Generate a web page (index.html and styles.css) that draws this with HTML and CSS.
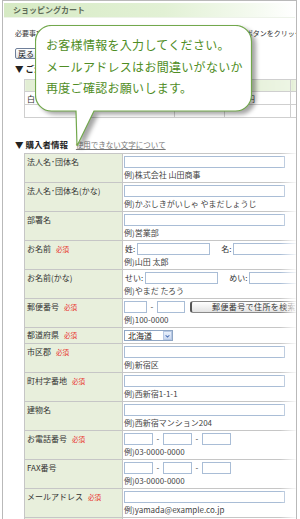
FILE: index.html
```html
<!DOCTYPE html>
<html lang="ja">
<head>
<meta charset="utf-8">
<title>ショッピングカート</title>
<link rel="stylesheet" href="styles.css">
</head>
<body>
<div class="frame">
  <div class="header">ショッピングカート</div>
  <div class="content">
    <p class="intro">必要事項をご入力のうえ、ページ下部にある「ご注文内容の確認へ進む」ボタンをクリックしてください。</p>
    <button class="back" type="button">戻る</button>
    <h2 class="sec">▼ ご注文内容</h2>
    <table class="order">
      <colgroup><col class="c1"><col class="c2"><col class="c3"><col class="c4"></colgroup>
      <tr class="oh"><td></td><td>数量</td><td>小計</td><td></td></tr>
      <tr><td>白ワイン</td><td>1</td><td>3,000円</td><td></td></tr>
      <tr><td></td><td></td><td></td><td></td></tr>
    </table>
    <h2 class="sec buyer">▼ 購入者情報 <a class="ng" href="#">使用できない文字について</a></h2>
    <table class="form">
      <colgroup><col class="cl"><col class="cr"></colgroup>
      <tr><th>法人名･団体名</th><td><input class="full" type="text"><div class="ex">例)株式会社 山田商事</div></td></tr>
      <tr><th>法人名･団体名(かな)</th><td><input class="full" type="text"><div class="ex">例)かぶしきがいしゃ やまだしょうじ</div></td></tr>
      <tr><th>部署名</th><td><input class="full" type="text"><div class="ex">例)営業部</div></td></tr>
      <tr><th>お名前<span class="req">必須</span></th><td><div class="line"><span class="pre">姓:</span><input class="nm" type="text"><span class="pre">名:</span><input class="nm" type="text"></div><div class="ex">例)山田 太郎</div></td></tr>
      <tr><th>お名前(かな)</th><td><div class="line"><span class="pre">せい:</span><input class="nm" type="text"><span class="pre">めい:</span><input class="nm" type="text"></div><div class="ex">例)やまだ たろう</div></td></tr>
      <tr><th>郵便番号<span class="req">必須</span></th><td><div class="line"><input class="z1" type="text"><span class="dash">-</span><input class="z2" type="text"><button class="zip" type="button">郵便番号で住所を検索する</button></div><div class="ex">例)100-0000</div></td></tr>
      <tr class="selrow"><th>都道府県<span class="req">必須</span></th><td><span class="sel"><select><option>北海道</option><option>青森県</option></select><span class="arr"><svg viewBox="0 0 9 8" width="9" height="8"><path d="M2 3 L4.5 5.5 L7 3" fill="none" stroke="#4a6fb5" stroke-width="1.4"/></svg></span></span></td></tr>
      <tr><th>市区郡<span class="req">必須</span></th><td><input class="full" type="text"><div class="ex">例)新宿区</div></td></tr>
      <tr><th>町村字番地<span class="req">必須</span></th><td><input class="full" type="text"><div class="ex">例)西新宿1-1-1</div></td></tr>
      <tr><th>建物名</th><td><input class="full" type="text"><div class="ex">例)西新宿マンション204</div></td></tr>
      <tr><th>お電話番号<span class="req">必須</span></th><td><div class="line"><input class="tel" type="text"><span class="dash">-</span><input class="tel" type="text"><span class="dash">-</span><input class="tel" type="text"></div><div class="ex">例)03-0000-0000</div></td></tr>
      <tr><th>FAX番号</th><td><div class="line"><input class="tel" type="text"><span class="dash">-</span><input class="tel" type="text"><span class="dash">-</span><input class="tel" type="text"></div><div class="ex">例)03-0000-0000</div></td></tr>
      <tr><th>メールアドレス<span class="req">必須</span></th><td><input class="full" type="text"><div class="ex">例)yamada@example.co.jp</div></td></tr>
      <tr><th>メールアドレス(確認用)<span class="req">必須</span></th><td><input class="full" type="text"><div class="ex">確認のためもう一度入力してください</div></td></tr>
    </table>
  </div>
  <div class="fade"></div>
</div>
<div class="callout">
  <svg class="bubble" viewBox="0 0 224 126" width="224" height="126">
    <path d="M16.5 0.5 H200.5 A16 16 0 0 1 216.5 16.5 V70 A16 16 0 0 1 200.5 86 H59 L42 121 L41 86 H16.5 A16 16 0 0 1 0.5 70 V16.5 A16 16 0 0 1 16.5 0.5 Z" fill="#fff" stroke="#72a84c" stroke-width="1.2"/>
  </svg>
  <p class="msg">お客様情報を入力してください。<br>メールアドレスはお間違いがないか<br>再度ご確認お願いします。</p>
</div>
</body>
</html>
```

FILE: styles.css
```css
* { box-sizing: border-box; }
html, body { margin: 0; padding: 0; background: #fff; }
body {
  width: 300px;
  height: 519px;
  overflow: hidden;
  font-family: "Noto Sans CJK JP", "Noto Sans", sans-serif;
  font-size: 8px;
  color: #333;
  position: relative;
}
.frame {
  position: relative;
  margin: 0 3px 0 2px;
  height: 560px;
  border: 1px solid #b9b9b9;
  overflow: hidden;
}
.header {
  margin: 2px 1px 0;
  height: 15px;
  padding-left: 9px;
  line-height: 14px;
  font-weight: bold;
  font-size: 8px;
  color: #5e6b58;
  background: linear-gradient(to right, #d6eac4 0%, #e2f1d5 55%, #f4faef 85%, #fff 100%);
  border-bottom: 1px solid #eef3ea;
}
.content { padding-left: 12px; }
.intro {
  margin: 10px 0 0;
  font-size: 7px;
  line-height: 10px;
  white-space: nowrap;
  color: #333;
}
.back {
  display: block;
  margin-top: 10px;
  height: 11px;
  padding: 0 2px;
  font-family: inherit;
  font-size: 8px;
  line-height: 9px;
  color: #222;
  border: 1px solid #6f7f99;
  border-radius: 2px;
  background: linear-gradient(#ffffff, #dfe3ea);
}
.sec {
  margin: 4px 0 0;
  font-size: 8.5px;
  line-height: 10px;
  font-weight: bold;
  color: #222;
}
.order {
  margin: 6px 0 0 9px;
  border-collapse: collapse;
  table-layout: fixed;
  width: 272px;
}
.order .c1 { width: 150px; }
.order .c2 { width: 50px; }
.order .c3 { width: 66px; }
.order .c4 { width: 6px; }
.order td {
  border: 1px solid #cfcfcf;
  height: 13px;
  padding: 0 2px;
  line-height: 11px;
  font-size: 8px;
}
.order .oh td {
  height: 12px;
  background: linear-gradient(to right, #e2eed4, #edf5e4);
}
.buyer { margin-top: 21px; }
.ng {
  margin-left: 6px;
  font-weight: normal;
  font-size: 7.5px;
  color: #777;
  text-decoration: underline;
}
.form {
  margin: 3px 0 0 9px;
  border-collapse: collapse;
  table-layout: fixed;
  width: 300px;
}
.form .cl { width: 98px; }
.form .cr { width: 202px; }
.form th, .form td {
  border: 1px solid #c6c6c6;
  vertical-align: top;
}
.form th {
  background: #e8efdc;
  text-align: left;
  font-weight: normal;
  padding: 3px 2px 0;
  line-height: 10px;
  font-size: 8px;
  color: #333;
  white-space: nowrap;
}
.form td {
  padding: 2px 1px 2px;
  white-space: nowrap;
}
.req {
  margin-left: 5px;
  font-size: 6.5px;
  color: #e8322c;
}
input {
  display: block;
  height: 12px;
  margin: 0;
  padding: 0;
  border: 1px solid #a9bdd6;
  background: #fff;
  font-size: 8px;
}
.full { width: 161px; }
.line {
  display: flex;
  align-items: center;
  height: 12px;
}
.pre { line-height: 10px; margin-right: 2px; color: #333; }
.line .pre:first-child { margin-left: 1px; }
.nm { width: 73px; margin-right: 11px; flex: none; }
.z1 { width: 23px; flex: none; }
.z2 { width: 28px; flex: none; }
.tel { width: 29px; flex: none; }
.dash { width: 10px; text-align: center; line-height: 10px; flex: none; }
.zip {
  flex: none;
  margin-left: 5px;
  height: 12px;
  width: 140px;
  padding: 0 0 0 20px;
  text-align: left;
  font-family: inherit;
  font-size: 8px;
  letter-spacing: 0.4px;
  line-height: 10px;
  color: #333;
  border: 1px solid #8a8a8a;
  border-left: 2px solid #555;
  border-radius: 3px;
  background: linear-gradient(#ffffff, #e3e3e3);
}
.ex {
  margin-top: 2px;
  line-height: 10px;
  font-size: 8px;
  color: #444;
}
.selrow th { padding-top: 2px; }
.selrow td { padding: 2px 1px; }
.sel {
  position: relative;
  display: block;
  width: 49px;
  height: 11px;
}
.sel select {
  appearance: none;
  -webkit-appearance: none;
  display: block;
  width: 49px;
  height: 11px;
  margin: 0;
  padding: 0 0 0 3px;
  border: 1px solid #8fa6c4;
  border-radius: 0;
  background: #fff;
  font-family: inherit;
  font-size: 8px;
  line-height: 9px;
  color: #222;
}
.arr {
  position: absolute;
  right: 1px;
  top: 1px;
  width: 9px;
  height: 9px;
  display: flex;
  align-items: center;
  justify-content: center;
  background: linear-gradient(#e9f0fb, #c9d8f0);
  border: 1px solid #b7c8e4;
}
.arr svg { display: block; width: 7px; height: 6px; }
.fade {
  position: absolute;
  top: 140px;
  right: 0;
  bottom: 0;
  width: 16px;
  background: linear-gradient(to right, rgba(255,255,255,0), rgba(255,255,255,0.9));
  pointer-events: none;
}
.callout {
  position: absolute;
  left: 35px;
  top: 25px;
  width: 224px;
  height: 126px;
}
.bubble {
  position: absolute;
  left: 0;
  top: 0;
  filter: drop-shadow(4px 3px 2px rgba(0,0,0,0.35));
}
.msg {
  position: relative;
  margin: 0;
  padding: 9px 0 0 11px;
  font-size: 12px;
  line-height: 21.5px;
  letter-spacing: 0.3px;
  color: #4f8d25;
  white-space: nowrap;
}
```
